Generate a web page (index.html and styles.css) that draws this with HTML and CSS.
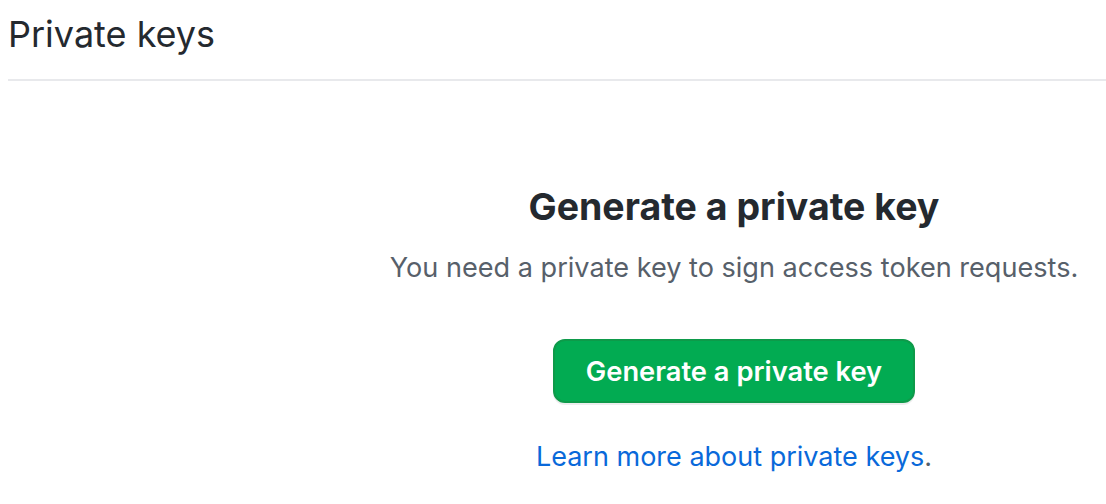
FILE: index.html
```html
<!DOCTYPE html>
<html>
<head>
<meta charset="utf-8">
<link rel="stylesheet" href="styles.css">
</head>
<body>
<div class="page">
  <div class="subhead">
    <h2 class="subhead-heading">Private keys</h2>
  </div>
  <div class="layout">
    <div class="spacer"></div>
    <div class="blankslate">
      <h3 class="blankslate-heading">Generate a private key</h3>
      <p class="blankslate-text">You need a private key to sign access token requests.</p>
      <button class="btn-primary" type="button">Generate a private key</button>
      <p class="blankslate-link"><a href="#">Learn more about private keys</a>.</p>
    </div>
  </div>
</div>
</body>
</html>
```
FILE: styles.css
```css
html, body {
  margin: 0;
  padding: 0;
  background: #ffffff;
}
body {
  font-family: Inter, "Liberation Sans", Arial, sans-serif;
  color: #1f2328;
}
.page {
  padding: 0 0 0 8px;
}
.subhead {
  border-bottom: 2px solid #e8e9ec;
  padding: 10px 0 21px 0;
}
.subhead-heading {
  margin: 0;
  font-size: 36px;
  font-weight: 400;
  line-height: 48px;
  color: #24292f;
}
.layout {
  display: flex;
}
.spacer {
  width: 354px;
  flex: none;
}
.blankslate {
  flex: 1;
  display: flex;
  flex-direction: column;
  align-items: center;
  padding-top: 101px;
}
.blankslate-heading {
  margin: 0;
  font-size: 37.5px;
  font-weight: 700;
  line-height: 50px;
  color: #24292f;
}
.blankslate-text {
  margin: 16px 0 0 0;
  font-size: 27.1px;
  line-height: 40px;
  color: #57606a;
}
.btn-primary {
  margin-top: 51px;
  font-family: inherit;
  font-size: 27.3px;
  font-weight: 600;
  color: #ffffff;
  background: #02ab52;
  border: 2px solid #0e9a4a;
  border-radius: 12px;
  padding: 0 31px;
  height: 64px;
  box-shadow: 0 2px 0 rgba(27, 31, 36, 0.08);
}
.blankslate-link {
  margin: 34px 0 0 0;
  font-size: 27px;
  line-height: 40px;
  color: #57606a;
}
.blankslate-link a {
  color: #0969da;
  text-decoration: none;
}
```
